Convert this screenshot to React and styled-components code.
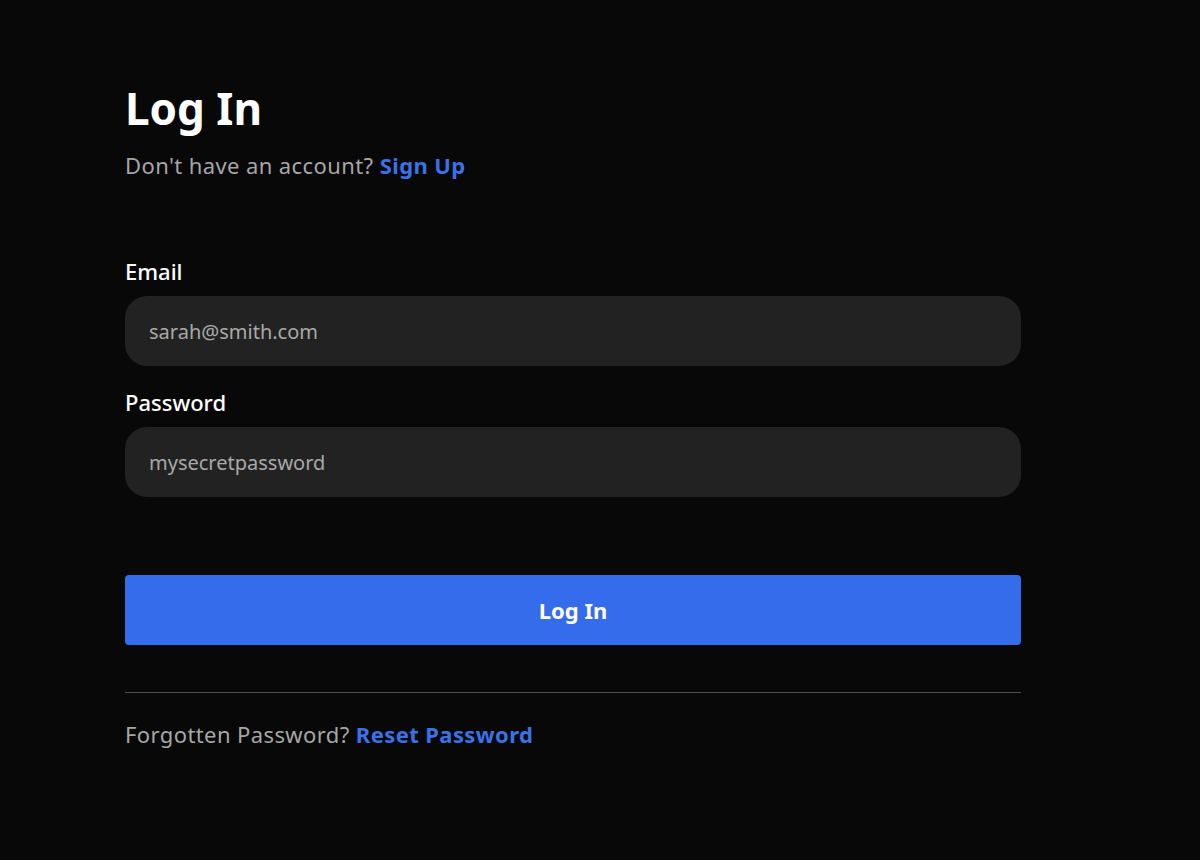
import React from 'react';
import styled, { createGlobalStyle } from 'styled-components';

const GlobalStyle = createGlobalStyle`
  html, body {
    margin: 0;
    padding: 0;
    background: #080808;
  }
  body {
    font-family: 'Noto Sans', 'Open Sans', sans-serif;
    color: #fff;
  }
`;

const Page = styled.div`
  min-height: 860px;
  padding: 78px 0 0 125px;
  box-sizing: border-box;
`;

const Form = styled.form`
  width: 896px;
  display: flex;
  flex-direction: column;
`;

const Title = styled.h1`
  margin: 0;
  font-size: 44px;
  font-weight: 700;
  line-height: 60px;
  color: #fff;
`;

const Muted = styled.p`
  margin: ${props => props.margin || '0'};
  font-size: 22px;
  line-height: 30px;
  letter-spacing: 0.4px;
  color: #a6a6a6;
`;

const TextLink = styled.a`
  color: #3a72e8;
  font-weight: 700;
  text-decoration: none;
`;

const Field = styled.div`
  display: flex;
  flex-direction: column;
  margin-top: ${props => props.top}px;
`;

const Label = styled.label`
  font-size: 22px;
  font-weight: 500;
  line-height: 30px;
  margin-bottom: 10px;
  color: #fff;
`;

const Input = styled.input`
  height: 70px;
  box-sizing: border-box;
  border: none;
  outline: none;
  border-radius: 22px;
  background: #222222;
  padding: 0 24px;
  font-family: inherit;
  font-size: 20px;
  color: #fff;

  &::placeholder {
    color: #a9a9a9;
  }
`;

const Button = styled.button`
  margin-top: 78px;
  height: 70px;
  border: none;
  border-radius: 4px;
  background: #356cec;
  color: #fff;
  font-family: inherit;
  font-size: 22px;
  font-weight: 700;
  cursor: pointer;
`;

const Divider = styled.hr`
  margin: 47px 0 0;
  border: none;
  border-top: 1px solid #4e4e4e;
`;

const App = () => (
  <>
    <GlobalStyle />
    <Page>
      <Form onSubmit={e => e.preventDefault()}>
        <Title>Log In</Title>
        <Muted margin="12px 0 0">
          Don't have an account? <TextLink href="#">Sign Up</TextLink>
        </Muted>

        <Field top={76}>
          <Label htmlFor="email">Email</Label>
          <Input id="email" type="email" placeholder="sarah@smith.com" />
        </Field>

        <Field top={21}>
          <Label htmlFor="password">Password</Label>
          <Input id="password" type="password" placeholder="mysecretpassword" />
        </Field>

        <Button type="submit">Log In</Button>
        <Divider />

        <Muted margin="26px 0 0">
          Forgotten Password? <TextLink href="#">Reset Password</TextLink>
        </Muted>
      </Form>
    </Page>
  </>
);

export default App;
